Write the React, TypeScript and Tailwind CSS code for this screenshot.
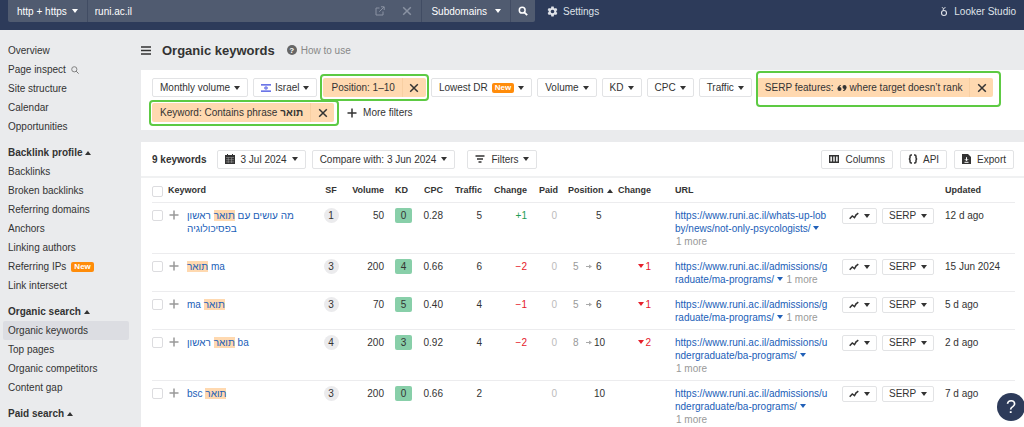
import React from 'react';

interface KeywordRow {
  id: number;
  keyword: { text: string; mark?: boolean }[];
  sf: number;
  volume: number;
  kd: number;
  cpc: string;
  traffic: number;
  change: string;
  from?: number;
  position: number;
  drop?: number;
  url: string;
  updated: string;
}

const rows: KeywordRow[] = [
  {
    id: 1,
    keyword: [{ text: 'מה עושים עם ' }, { text: 'תואר', mark: true }, { text: ' ראשון בפסיכולוגיה' }],
    sf: 1, volume: 50, kd: 0, cpc: '0.28', traffic: 5, change: '+1', position: 5,
    url: 'https://www.runi.ac.il/whats-up-lobby/news/not-only-psycologists/',
    updated: '12 d ago'
  },
  {
    id: 2,
    keyword: [{ text: 'תואר', mark: true }, { text: ' ma' }],
    sf: 3, volume: 200, kd: 4, cpc: '0.66', traffic: 6, change: '−2', from: 5, position: 6, drop: 1,
    url: 'https://www.runi.ac.il/admissions/graduate/ma-programs/',
    updated: '15 Jun 2024'
  },
  {
    id: 3,
    keyword: [{ text: 'ma ' }, { text: 'תואר', mark: true }],
    sf: 3, volume: 70, kd: 5, cpc: '0.40', traffic: 4, change: '−1', from: 5, position: 6, drop: 1,
    url: 'https://www.runi.ac.il/admissions/graduate/ma-programs/',
    updated: '5 d ago'
  },
  {
    id: 4,
    keyword: [{ text: 'תואר', mark: true }, { text: ' ראשון ba' }],
    sf: 4, volume: 200, kd: 3, cpc: '0.92', traffic: 4, change: '−2', from: 8, position: 10, drop: 2,
    url: 'https://www.runi.ac.il/admissions/undergraduate/ba-programs/',
    updated: '2 d ago'
  },
  {
    id: 5,
    keyword: [{ text: 'bsc ' }, { text: 'תואר', mark: true }],
    sf: 3, volume: 200, kd: 0, cpc: '0.66', traffic: 2, change: '', position: 10,
    url: 'https://www.runi.ac.il/admissions/undergraduate/ba-programs/',
    updated: '7 d ago'
  }
];

const sections = [
  { title: '', items: ['Overview', 'Page inspect', 'Site structure', 'Calendar', 'Opportunities'] },
  {
    title: 'Backlink profile',
    items: ['Backlinks', 'Broken backlinks', 'Referring domains', 'Anchors', 'Linking authors', 'Referring IPs', 'Link intersect']
  },
  { title: 'Organic search', items: ['Organic keywords', 'Top pages', 'Organic competitors', 'Content gap'] },
  { title: 'Paid search', items: [] }
];

const Caret: React.FC<{ up?: boolean; className?: string }> = ({ up, className = '' }) => (
  <svg viewBox="0 0 6 4" className={`inline-block h-1 w-1.5 shrink-0 fill-current ${className}`} aria-hidden="true">
    <path d={up ? 'M0 4h6L3 0z' : 'M0 0h6L3 4z'} />
  </svg>
);

const Cross: React.FC<{ className?: string }> = ({ className = '' }) => (
  <svg viewBox="0 0 10 10" className={`size-[10px] shrink-0 stroke-current ${className}`} fill="none" aria-hidden="true">
    <path d="M1.2 1.2l7.6 7.6M8.8 1.2L1.2 8.8" strokeWidth="1.5" />
  </svg>
);

const Plus: React.FC<{ className?: string }> = ({ className = '' }) => (
  <svg viewBox="0 0 10 10" className={`size-[10px] shrink-0 stroke-current ${className}`} fill="none" aria-hidden="true">
    <path d="M5 .5v9M.5 5h9" strokeWidth="1.5" />
  </svg>
);

const NewBadge = () => (
  <span className="rounded-xs bg-[#ff8c0a] px-[3px] text-[8px] leading-[10px] font-bold text-white">New</span>
);

const Button: React.FC<{ children: React.ReactNode }> = ({ children }) => (
  <button
    type="button"
    className="flex h-[19px] shrink-0 items-center gap-[5px] rounded-xs border border-[#e2e3e5] bg-white px-[7px] whitespace-nowrap hover:bg-gray-50"
  >
    {children}
  </button>
);

const FilterButton: React.FC<{ children: React.ReactNode }> = ({ children }) => (
  <button
    type="button"
    className="flex h-[19px] shrink-0 items-center gap-1 rounded-xs border border-[#e2e3e5] bg-white px-[7px] whitespace-nowrap hover:bg-gray-50"
  >
    {children}
  </button>
);

// applied filter with its remove button, ringClass places the green marker round it
const ActiveFilter: React.FC<{ children: React.ReactNode; ringClass: string }> = ({ children, ringClass }) => (
  <div className="relative flex h-[19px] shrink-0 items-stretch rounded-xs bg-[#ffd9b0] whitespace-nowrap">
    <button type="button" className="flex items-center gap-[3px] pr-[7px] pl-2">{children}</button>
    <button type="button" aria-label="Remove filter" className="flex w-6 items-center justify-center border-l border-[#f8cfa2]">
      <Cross />
    </button>
    <span className={`pointer-events-none absolute rounded-[4px] border-2 border-[#5dca43] ${ringClass}`} />
  </div>
);

const TopBar = () => (
  <header className="flex h-[30px] shrink-0 items-start bg-[#2d3b5a] pl-2 text-white">
    <div className="flex h-[22px] max-w-[527px] flex-1 rounded-b-xs bg-[#505b70]">
      <button type="button" className="flex items-center gap-[5px] border-r border-[#414c63] pr-[9px] pl-[9px] whitespace-nowrap">
        http + https <Caret />
      </button>
      <input aria-label="Target" defaultValue="runi.ac.il" className="min-w-0 flex-1 px-[7px] outline-none" />
      <button type="button" aria-label="Open target" className="px-2 text-[#8a93a3]">
        <svg viewBox="0 0 10 10" className="size-[10px] stroke-current" fill="none">
          <path d="M4.5 2H1v7h7V5.5M6 .8h3.2V4M9 1L4.3 5.7" />
        </svg>
      </button>
      <button type="button" aria-label="Clear target" className="px-[9px] text-[#8a93a3]">
        <Cross />
      </button>
      <button type="button" className="flex items-center gap-2 border-x border-[#414c63] px-[9px]">
        Subdomains <Caret />
      </button>
      <button type="button" aria-label="Search" className="flex w-6 items-center justify-center">
        <svg viewBox="0 0 10 10" className="size-[10px] stroke-current" fill="none">
          <circle cx="4.2" cy="4.2" r="2.9" strokeWidth="1.5" />
          <path d="M6.3 6.3l2.9 2.9" strokeWidth="1.8" />
        </svg>
      </button>
    </div>
    <button type="button" className="ml-3 flex h-[22px] items-center gap-[5px] text-[#dfe2e8]">
      <svg viewBox="0 0 24 24" className="size-[11px] fill-current" aria-hidden="true">
        <path
          fillRule="evenodd"
          d="M9.5 1h5l.7 3.2 1.8 1 3.1-1 2.5 4.3-2.4 2.2v2.6l2.4 2.2-2.5 4.3-3.1-1-1.8 1-.7 3.2h-5l-.7-3.2-1.8-1-3.1 1-2.5-4.3 2.4-2.2v-2.6L1.4 8.5l2.5-4.3 3.1 1 1.8-1zM12 8a4 4 0 1 0 0 8 4 4 0 0 0 0-8z"
        />
      </svg>
      Settings
    </button>
    <a href="#looker" className="mr-2 ml-auto flex h-[22px] items-center gap-[6px] text-[#dfe2e8]">
      <svg viewBox="0 0 8 12" className="h-3 w-2 stroke-current" fill="none" aria-hidden="true">
        <circle cx="4" cy="8" r="2.500" strokeWidth="1.100" />
        <path d="M3.600 5.500L3 3.700M2 2.200l1.300 1.300 2.200-.9" strokeWidth="1" />
      </svg>
      Looker Studio
    </a>
  </header>
);

const Sidebar = () => (
  <nav className="w-[141px] shrink-0 px-[3px] pt-[11px]">
    {sections.map((section) => (
      <div key={section.title} className="mb-[7px]">
        {section.title && (
          <button type="button" className="flex h-[19px] items-center gap-[3px] px-[5px] font-bold">
            {section.title} <Caret up />
          </button>
        )}
        <ul>
          {section.items.map((item) => (
            <li key={item}>
              <a
                href="#nav"
                className={`mr-[9px] flex h-[19px] items-center gap-[5px] rounded-xs px-[5px] ${
                  item === 'Organic keywords' ? 'bg-[#dcdde2]' : ''
                }`}
              >
                {item}
                {item === 'Page inspect' && (
                  <svg viewBox="0 0 8 8" className="size-2 stroke-[#777]" fill="none" aria-hidden="true">
                    <circle cx="3.3" cy="3.3" r="2.6" strokeWidth=".9" />
                    <path d="M5.2 5.2l2.4 2.4" />
                  </svg>
                )}
                {item === 'Referring IPs' && <NewBadge />}
              </a>
            </li>
          ))}
        </ul>
      </div>
    ))}
  </nav>
);

const Filters = () => (
  <section className="flex flex-wrap gap-x-[5px] gap-y-[6px] bg-white py-2 pr-2 pl-[11px]">
    <FilterButton>Monthly volume <Caret /></FilterButton>
    <FilterButton>
      <svg viewBox="0 0 10 8" className="h-2 w-[10px]" aria-hidden="true">
        <path d="M0 .9h10M0 7.1h10" stroke="#3b48e0" strokeWidth="1.2" />
        <path d="M5 2.2l1.5 2.5h-3zM5 5.8L3.5 3.3h3z" fill="none" stroke="#3b48e0" strokeWidth=".5" />
      </svg>
      Israel <Caret />
    </FilterButton>
    <div className="ml-[1px]">
      <ActiveFilter ringClass="-inset-x-[3px] -inset-y-1">Position: 1–10</ActiveFilter>
    </div>
    <FilterButton>Lowest DR <NewBadge /> <Caret /></FilterButton>
    <FilterButton>Volume <Caret /></FilterButton>
    <FilterButton>KD <Caret /></FilterButton>
    <FilterButton>CPC <Caret /></FilterButton>
    <FilterButton>Traffic <Caret /></FilterButton>
    <ActiveFilter ringClass="-top-[7px] -right-2 -bottom-[10px] -left-[1px]">
      SERP features:
      <svg viewBox="0 0 10 8" className="h-2 w-[10px] fill-current" aria-hidden="true">
        <circle cx="2.5" cy="5.1" r="2" />
        <circle cx="7.5" cy="2.9" r="2" />
        <path d="M.5 5.1C.5 3 1.7 1.3 3.700.9l.3.9C2.800 2.200 2.200 3 2.200 4zM9.500 2.900c0 2.100-1.200 3.800-3.200 4.200L6 6.200c1.200-.4 1.800-1.200 1.800-2.200z" />
      </svg>
      where target doesn’t rank
    </ActiveFilter>
    <ActiveFilter ringClass="-top-[3px] -right-[5px] -bottom-1 -left-[3px]">
      Keyword: Contains phrase <b>תואר</b>
    </ActiveFilter>
    <button type="button" className="ml-2 flex items-center gap-[6px]">
      <Plus /> More filters
    </button>
  </section>
);

const Toolbar = () => (
  <div className="flex h-9 items-center border-b-2 border-[#f0f1f2] pr-[10px] pl-[11px]">
    <h2 className="mr-[11px] font-bold">9 keywords</h2>
    <Button>
      <svg viewBox="0 0 10 10" className="size-[10px]" aria-hidden="true">
        <path d="M0 1h10v9H0zM2 0h1v2H2zM7 0h1v2H7z" fill="#333" />
        <path d="M1 3.5h8M1 5.7h8M1 7.9h8M3.3 3.5V9M6.6 3.5V9" stroke="#aaa" strokeWidth=".5" />
      </svg>
      3 Jul 2024 <Caret />
    </Button>
    <div className="mr-3 ml-[6px]">
      <Button>Compare with: 3 Jun 2024 <Caret /></Button>
    </div>
    <FilterButton>
      <svg viewBox="0 0 10 10" className="mr-[2px] size-[10px] stroke-current" fill="none" aria-hidden="true">
        <path d="M.5 2h9M2 5h6M3.5 8h3" strokeWidth="1.4" />
      </svg>
      Filters <Caret />
    </FilterButton>
    <div className="ml-auto flex gap-[7px]">
      <Button>
        <svg viewBox="0 0 10 8" className="mr-[2px] h-2 w-[10px]" aria-hidden="true">
          <path d="M.7.7h8.6v6.6H.7zM3.6.7v6.600M6.400.7v6.600" fill="none" stroke="#333" strokeWidth="1.400" />
        </svg>
        Columns
      </Button>
      <Button>
        <svg viewBox="0 0 10 10" className="size-[10px] stroke-current" fill="none" aria-hidden="true">
          <path d="M4 1H3.2Q2 1 2 2.2v1.600Q2 5 .8 5 2 5 2 6.200v1.600Q2 9 3.200 9H4M6 1h.8Q8 1 8 2.200v1.600Q8 5 9.200 5 8 5 8 6.200v1.600Q8 9 6.800 9H6" strokeWidth="1.500" />
        </svg>
        API
      </Button>
      <Button>
        <svg viewBox="0 0 9 10" className="mr-[1px] h-[10px] w-[9px]" aria-hidden="true">
          <path d="M0 0h6l3 3v7H0z" fill="#333" />
          <path d="M4.5 3.200v3.300M2.900 5.200l1.600 1.600 1.600-1.600M2.500 8.300h4" fill="none" stroke="#fff" />
        </svg>
        Export
      </Button>
    </div>
  </div>
);

const Checkbox: React.FC<{ label: string }> = ({ label }) => (
  <input
    type="checkbox"
    aria-label={label}
    className="mt-[1px] block size-[11px] appearance-none rounded-xs border border-[#dcdcdf] bg-white checked:bg-blue-600"
  />
);

const KeywordsTable = () => (
  <div className="pr-[9px] pl-[11px]">
    <table className="w-full table-fixed">
      <colgroup>
        <col className="w-[16px]" />
        <col className="w-[150px]" />
        <col className="w-[26px]" />
        <col className="w-[40px]" />
        <col className="w-[28px]" />
        <col className="w-[31px]" />
        <col className="w-[39px]" />
        <col className="w-[45px]" />
        <col className="w-[32px]" />
        <col className="w-[56px]" />
        <col className="w-[36px]" />
        <col />
        <col className="w-[103px]" />
        <col className="w-[70px]" />
      </colgroup>
      <thead>
        <tr className="h-6 text-right text-[9px] whitespace-nowrap *:pt-[2px]">
          <th><Checkbox label="Select all" /></th>
          <th className="text-left">Keyword</th>
          <th className="text-center">SF</th>
          <th>Volume</th>
          <th className="pl-[11px] text-left">KD</th>
          <th>CPC</th>
          <th>Traffic</th>
          <th>Change</th>
          <th className="pr-[1px]">Paid</th>
          <th className="pl-[9px] text-left">
            <span className="flex items-center gap-[3px]">Position <Caret up /></span>
          </th>
          <th>Change</th>
          <th className="pl-6 text-left">URL</th>
          <th aria-label="Actions" />
          <th className="text-left">Updated</th>
        </tr>
      </thead>
      <tbody>
        {rows.map((row) => (
          <tr key={row.id} className="border-t border-[#ececee] text-right align-top *:pt-[6px] *:pb-[5px]">
            <td><Checkbox label={`Select keyword ${row.id}`} /></td>
            <td className="text-left">
              <div className="flex items-start gap-2">
                <button type="button" aria-label="Add to list" className="ml-[1px] flex h-[13px] items-center text-[#999]">
                  <Plus />
                </button>
                <a href="#keyword" className="max-w-[120px] text-[#2160b8]">
                  {row.keyword.map((part) => (
                    <span key={part.text} className={part.mark ? 'bg-[#ffd9b0]' : ''}>{part.text}</span>
                  ))}
                </a>
              </div>
            </td>
            <td>
              <span className="mx-auto -my-[1px] flex size-[15px] items-center justify-center rounded-full bg-[#ebebed]">{row.sf}</span>
            </td>
            <td>{row.volume}</td>
            <td>
              <span className="-my-[1px] ml-auto flex h-[15px] w-[17px] items-center justify-center rounded-xs bg-[#88cfa9]">{row.kd}</span>
            </td>
            <td>{row.cpc}</td>
            <td>{row.traffic}</td>
            <td className={row.change.startsWith('+') ? 'text-[#1f9d55]' : 'text-[#e5202b]'}>{row.change}</td>
            <td className="pr-[2px] text-[#bbb]">0</td>
            <td>
              <div className="flex items-center text-left">
                <span className="ml-[14px] w-[11px] text-[#999]">{row.from}</span>
                <span className="w-[10px] text-[#aaa]">
                  {row.from && (
                    <svg viewBox="0 0 6 5" className="ml-[2px] h-[5px] w-1.5" aria-hidden="true">
                      <path d="M0 2h3V.5l3 2-3 2V3H0z" fill="currentColor" />
                    </svg>
                  )}
                </span>
                <span className="w-[9px] whitespace-nowrap">
                  <span className={row.position > 9 ? '' : 'pl-[2px]'}>{row.position}</span>
                </span>
              </div>
            </td>
            <td className="text-[#e5202b]">
              {row.drop && (
                <span className="flex items-center justify-end gap-[1px]"><Caret /> {row.drop}</span>
              )}
            </td>
            <td className="pr-[13px] pl-6 text-left">
              <a href="#url" className="break-all text-[#2160b8]">{row.url}</a>{' '}
              <Caret className="mb-[1px] text-[#2160b8]" />{' '}
              <span className="inline-block pl-[1px] whitespace-nowrap text-[#999]">1 more</span>
            </td>
            <td>
              <div className="-my-[1px] flex gap-[5px]">
                <button type="button" aria-label="Position history" className="flex h-[16px] items-center gap-[5px] rounded-xs border border-[#e2e3e5] px-[6px]">
                  <svg viewBox="0 0 10 8" className="h-2 w-[10px] stroke-current" fill="none" aria-hidden="true">
                    <path d="M.7 6.800L3.300 4l2.200 1.600L7 3.200M6.200 3.600L9.300 1.200" strokeWidth="1.500" />
                  </svg>
                  <Caret />
                </button>
                <button type="button" className="flex h-[16px] items-center gap-[5px] rounded-xs border border-[#e2e3e5] px-[6px]">
                  SERP <Caret />
                </button>
              </div>
            </td>
            <td className="text-left whitespace-nowrap">{row.updated}</td>
          </tr>
        ))}
      </tbody>
    </table>
  </div>
);

const App = () => {
  return (
    <div className="flex h-screen flex-col overflow-hidden bg-[#eaebed] font-['Liberation_Sans',Arial,sans-serif] text-[10px] leading-[13px] text-[#333]">
      <TopBar />
      <div className="flex min-h-0 flex-1">
        <Sidebar />
        <main className="flex min-w-0 flex-1 flex-col">
          <div className="flex h-10 shrink-0 items-center">
            <button type="button" aria-label="Toggle menu">
              <svg viewBox="0 0 10 9" className="h-[9px] w-[10px] stroke-current" aria-hidden="true">
                <path d="M0 1h10M0 4.5h10M0 8h10" strokeWidth="1.5" />
              </svg>
            </button>
            <h1 className="ml-[11px] text-[13px] font-bold">Organic keywords</h1>
            <a href="#help" className="ml-3 flex items-center gap-1 text-[#888]">
              <span className="flex size-[10px] items-center justify-center rounded-full bg-[#666] text-[8px] font-bold text-white">?</span>
              How to use
            </a>
          </div>
          <Filters />
          <section className="mt-3 flex-1 bg-white">
            <Toolbar />
            <KeywordsTable />
          </section>
        </main>
      </div>
      <button
        type="button"
        aria-label="Help"
        className="fixed -right-[1px] bottom-[6px] flex size-7 items-center justify-center rounded-full bg-[#2d3b5a] text-[18px] text-white"
      >
        ?
      </button>
    </div>
  );
};

export default App;
